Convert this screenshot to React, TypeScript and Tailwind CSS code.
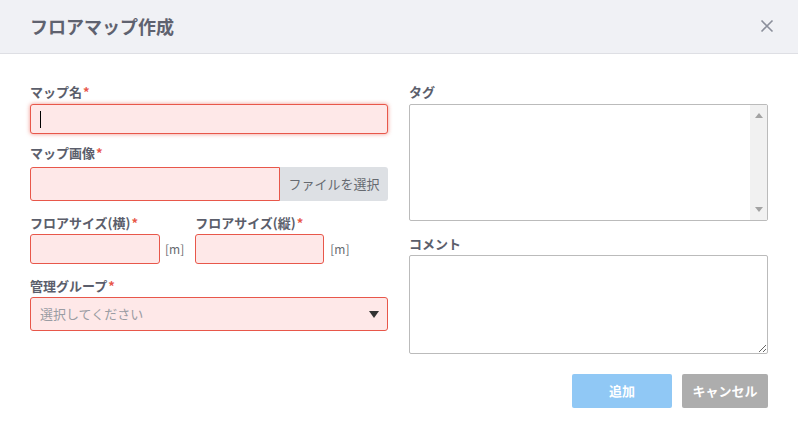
import React from "react";

const font = { fontFamily: '"Noto Sans CJK JP", "Noto Sans", sans-serif' };

function Label({ text, required }: { text: string; required?: boolean }) {
  return (
    <div className="h-[18px] text-[13px] leading-[18px] font-bold text-[#5b5e6b] whitespace-nowrap">
      {text}
      {required && <span className="text-[#e8574a] ml-[1px]">*</span>}
    </div>
  );
}

export default function App() {
  return (
    <div style={font} className="w-[798px] h-[427px] bg-white overflow-hidden">
      <div className="h-[54px] bg-[#f0f1f5] border-b border-[#dedfe4] flex items-center justify-between pl-[30px] pr-[24px]">
        <div className="text-[18px] font-bold text-[#5f626f] leading-none -mt-[2px]">フロアマップ作成</div>
        <svg width="14" height="14" viewBox="0 0 14 14" className="-mt-[1px]">
          <path d="M1.5 1.5 L12.5 12.5 M12.5 1.5 L1.5 12.5" stroke="#8b8f9b" strokeWidth="1.6" fill="none" />
        </svg>
      </div>
      <div className="flex pl-[30px] pr-[30px] pt-[29px] gap-[21px]">
        <div className="w-[358px] flex flex-col">
          <Label text="マップ名" required />
          <div className="mt-[3px] h-[30px] rounded-[3px] border border-[#e8574a] bg-[#fee8e8] shadow-[0_0_4px_rgba(232,87,74,0.65)] flex items-center pl-[9px]">
            <div className="w-[1px] h-[17px] bg-black" />
          </div>
          <div className="mt-[10px]">
            <Label text="マップ画像" required />
          </div>
          <div className="mt-[5px] h-[34px] flex">
            <div className="flex-1 rounded-l-[3px] border border-[#e8574a] bg-[#fee8e8]" />
            <div className="w-[108px] rounded-r-[3px] bg-[#dde0e4] flex items-center justify-center text-[13px] text-[#666a70]">
              ファイルを選択
            </div>
          </div>
          <div className="mt-[13px] flex gap-[11px]">
            <div className="flex flex-col">
              <Label text="フロアサイズ(横)" required />
              <div className="mt-[2px] flex items-center">
                <div className="w-[130px] h-[30px] rounded-[3px] border border-[#e8574a] bg-[#fee8e8]" />
                <span className="ml-[5px] text-[12px] text-[#666a70]">[m]</span>
              </div>
            </div>
            <div className="flex flex-col">
              <Label text="フロアサイズ(縦)" required />
              <div className="mt-[2px] flex items-center">
                <div className="w-[129px] h-[30px] rounded-[3px] border border-[#e8574a] bg-[#fee8e8]" />
                <span className="ml-[6px] text-[12px] text-[#666a70]">[m]</span>
              </div>
            </div>
          </div>
          <div className="mt-[13px]">
            <Label text="管理グループ" required />
          </div>
          <div className="mt-[2px] h-[34px] rounded-[3px] border border-[#e8574a] bg-[#fee8e8] flex items-center justify-between pl-[9px] pr-[8px]">
            <span className="text-[13px] text-[#9a9ca3]">選択してください</span>
            <svg width="10" height="7" viewBox="0 0 10 7">
              <path d="M0 0 H10 L5 7 Z" fill="#333" />
            </svg>
          </div>
        </div>
        <div className="w-[359px] flex flex-col">
          <Label text="タグ" />
          <div className="mt-[3px] h-[117px] rounded-[2px] border border-[#bbbbbb] bg-white flex justify-end overflow-hidden">
            <div className="w-[17px] bg-[#f1f1f1] flex flex-col items-center justify-between py-[8px]">
              <svg width="8" height="5" viewBox="0 0 8 5">
                <path d="M0 5 L4 0 L8 5 Z" fill="#a3a3a3" />
              </svg>
              <svg width="8" height="5" viewBox="0 0 8 5">
                <path d="M0 0 L8 0 L4 5 Z" fill="#a3a3a3" />
              </svg>
            </div>
          </div>
          <div className="mt-[14px]">
            <Label text="コメント" />
          </div>
          <textarea className="mt-[2px] h-[99px] rounded-[2px] border border-[#bbbbbb] bg-white outline-none block w-full" />
          <div className="mt-[20px] flex justify-end gap-[10px]">
            <div className="w-[100px] h-[34px] rounded-[2px] bg-[#90c8f5] flex items-center justify-center text-[13px] font-bold text-white">
              追加
            </div>
            <div className="w-[86px] h-[34px] rounded-[2px] bg-[#adadad] flex items-center justify-center text-[13px] font-bold text-white">
              キャンセル
            </div>
          </div>
        </div>
      </div>
    </div>
  );
}
